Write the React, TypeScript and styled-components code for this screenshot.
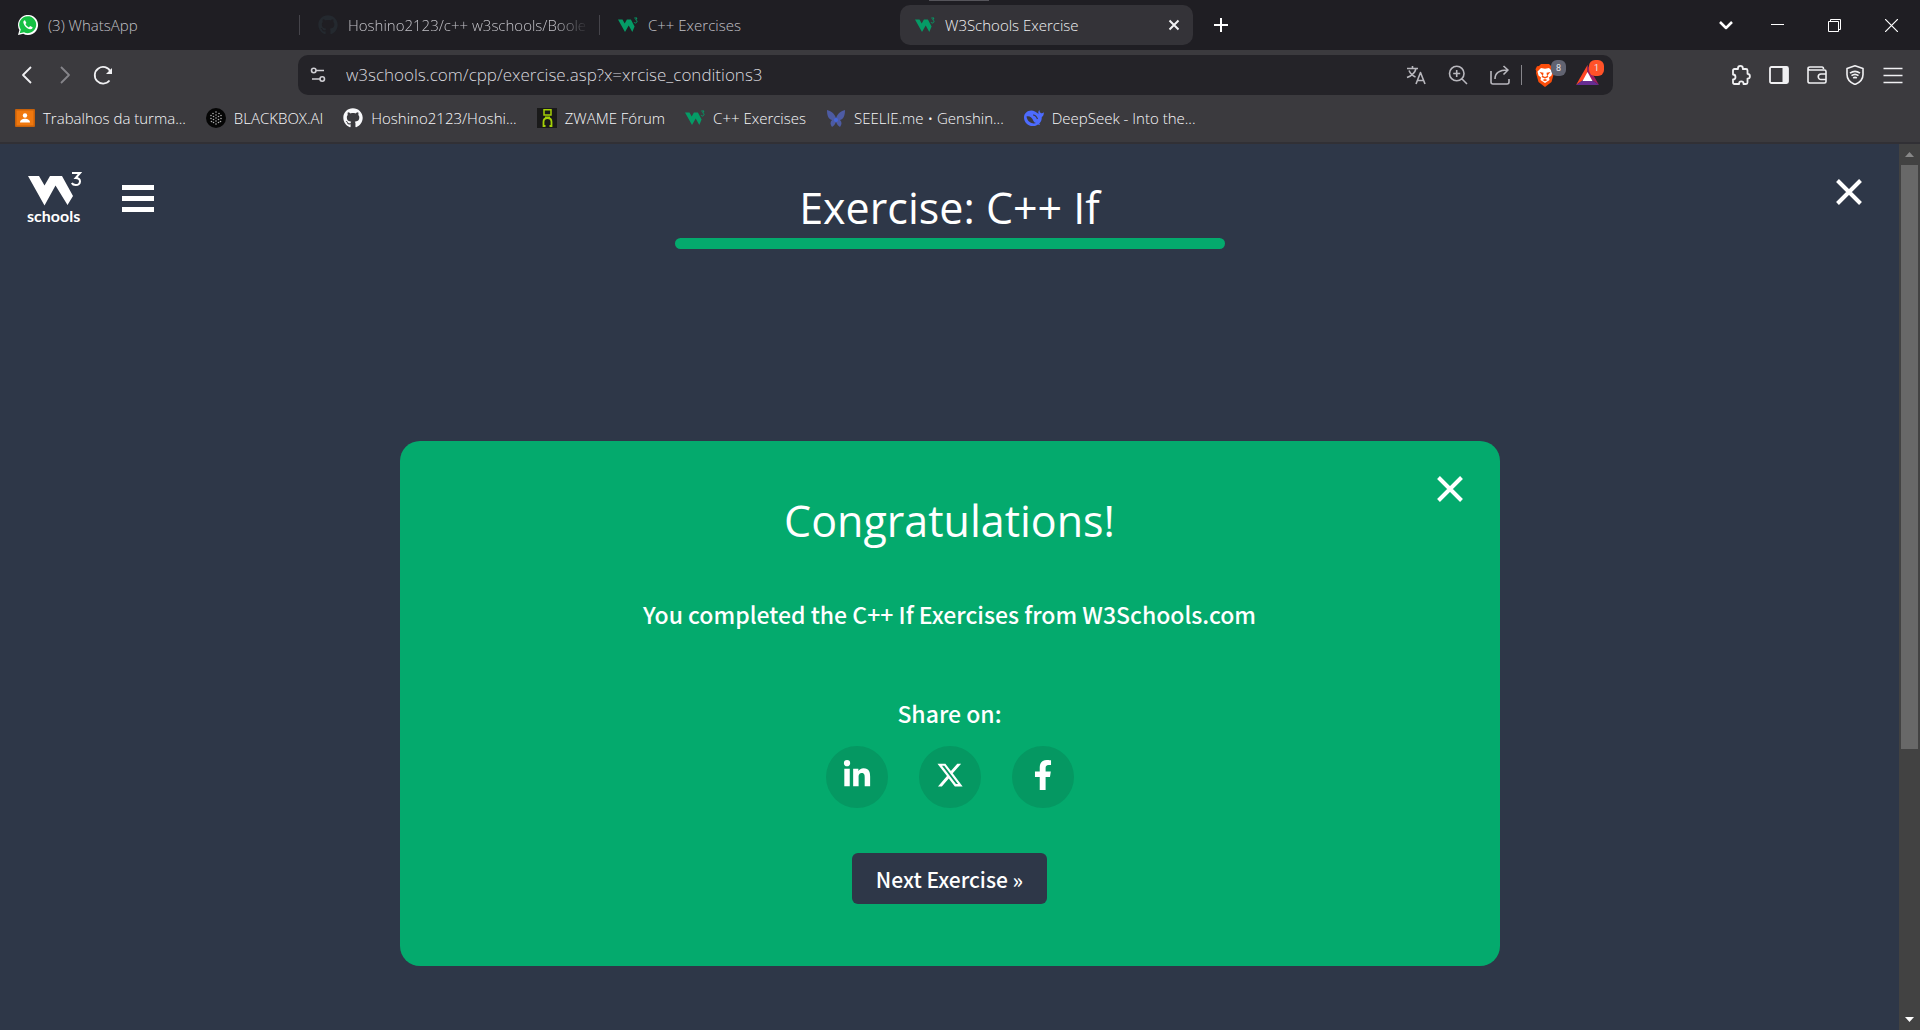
import React from "react";
import styled, { createGlobalStyle } from "styled-components";
import { FaGithub, FaLinkedinIn, FaFacebookF } from "react-icons/fa";
import { FaXTwitter } from "react-icons/fa6";

const UI = `"Open Sans", "Noto Sans", sans-serif`;
const SOURCE = `"Noto Sans CJK SC", "Open Sans", sans-serif`;

const GlobalStyle = createGlobalStyle`
  * { box-sizing: border-box; }
  body { margin: 0; background: #2e3748; font-family: ${UI}; color: #fff; overflow: hidden; }
  button, input { font: inherit; color: inherit; }
  button { padding: 0; border: 0; background: none; cursor: pointer; }
  a { color: inherit; text-decoration: none; }
  svg { display: block; flex: none; }
`;

const Window = styled.div`
  display: flex;
  flex-direction: column;
  height: 100vh;
`;

/* ---------- tab strip ---------- */
const TabStrip = styled.header`
  display: flex;
  align-items: center;
  height: 50px;
  flex: none;
  background: #1f1e23;
  position: relative;
`;
const DragHandle = styled.span`
  position: absolute;
  top: 0;
  left: 929px;
  width: 60px;
  height: 1px;
  background: #55545a;
`;
const Tabs = styled.nav`
  display: flex;
  flex: 0 1 1200px;
  min-width: 0;
`;
const Tab = styled.div<{ $divider?: boolean }>`
  display: flex;
  align-items: center;
  flex: 1 1 0;
  min-width: 0;
  height: 40px;
  position: relative;
  padding-right: 7px;
  &::after {
    content: "";
    display: ${(p) => (p.$divider ? "block" : "none")};
    position: absolute;
    right: 0;
    top: 10px;
    height: 20px;
    width: 1px;
    background: #45444a;
  }
`;
const TabFace = styled.button<{ $active?: boolean }>`
  display: flex;
  align-items: center;
  gap: 10px;
  flex: 1;
  min-width: 0;
  height: 40px;
  padding: ${(p) => (p.$active ? "0 13px 0 15px" : "0 4px 0 18px")};
  border-radius: 10px;
  background: ${(p) => (p.$active ? "#343338" : "transparent")};
  color: ${(p) => (p.$active ? "#f2f2f4" : "#c2c1c7")};
  font-size: 15px;
  line-height: 20px;
  font-weight: 300;
  text-align: left;
`;
const TabTitle = styled.span<{ $fade?: boolean }>`
  flex: 1;
  min-width: 0;
  overflow: hidden;
  white-space: nowrap;
  ${(p) => p.$fade && "mask-image: linear-gradient(90deg, #000 86%, transparent);"}
`;
const NewTab = styled.button`
  display: grid;
  place-items: center;
  width: 42px;
  height: 40px;
`;
const WindowControls = styled.div`
  display: flex;
  margin-left: auto;
`;
const WindowButton = styled.button<{ $narrow?: boolean }>`
  display: grid;
  place-items: center;
  width: ${(p) => (p.$narrow ? 46 : 57)}px;
  height: 48px;
`;

/* ---------- toolbar ---------- */
const Toolbar = styled.div`
  display: grid;
  grid-template-columns: 298px minmax(0, 1fr) 307px;
  align-items: center;
  height: 50px;
  flex: none;
  background: #3b3a3e;
`;
const NavGroup = styled.div`
  display: flex;
  padding-left: 8px;
`;
const NavButton = styled.button<{ $dim?: boolean }>`
  display: grid;
  place-items: center;
  width: 38px;
  height: 40px;
  color: ${(p) => (p.$dim ? "#86858a" : "#f0f0f2")};
`;
const AddressBar = styled.div`
  display: flex;
  align-items: center;
  height: 40px;
  padding: 0 7px 0 10px;
  border-radius: 10px;
  background: #242328;
  color: #b8b7bd;
`;
const SiteButton = styled.button`
  display: grid;
  place-items: center;
  width: 20px;
  height: 40px;
  margin-right: 18px;
  color: #d0cfd4;
`;
const UrlLabel = styled.label`
  display: flex;
  flex: 1;
  min-width: 0;
  font-size: 17px;
  font-weight: 300;
`;
const UrlInput = styled.input`
  flex: 1;
  min-width: 0;
  height: 32px;
  padding: 0 0 2px;
  border: 0;
  outline: 0;
  background: none;
  color: #d9d8de;
`;
const AddressAction = styled.button<{ $width?: number }>`
  display: grid;
  place-items: center;
  position: relative;
  width: ${(p) => p.$width ?? 42}px;
  height: 40px;
`;
const AddressDivider = styled.span`
  width: 1px;
  height: 20px;
  background: #87868b;
`;
const Badge = styled.span<{ $color: string }>`
  position: absolute;
  top: 5px;
  right: 2px;
  width: 15px;
  height: 16px;
  border-radius: 6px;
  background: ${(p) => p.$color};
  color: #e6e6ea;
  font: 9px/16px Roboto, sans-serif;
  text-align: center;
`;
const ToolGroup = styled.div`
  display: flex;
  justify-content: flex-end;
  padding-right: 8px;
  color: #ececef;
`;

/* ---------- bookmarks ---------- */
const BookmarkBar = styled.nav`
  display: flex;
  align-items: center;
  gap: 20px;
  height: 44px;
  flex: none;
  padding: 0 15px 6px;
  border-bottom: 2px solid #313035;
  background: #3b3a3e;
`;
const Bookmark = styled.a`
  display: flex;
  align-items: center;
  gap: 8px;
  color: #f8f8fa;
  font-size: 15px;
  line-height: 20px;
  font-weight: 300;
  white-space: nowrap;
`;

/* ---------- page ---------- */
const Viewport = styled.div`
  display: flex;
  flex: 1;
  min-height: 0;
`;
const Page = styled.main`
  flex: 1;
  min-width: 0;
  overflow: hidden;
  background: #2e3748;
`;
const PageHeader = styled.div`
  display: grid;
  grid-template-columns: 1fr minmax(0, 550px) 1fr;
  align-items: start;
`;
const HeaderLeft = styled.div`
  display: flex;
  gap: 40px;
  padding: 27px 0 0 27px;
`;
const MenuButton = styled.button`
  display: grid;
  align-content: center;
  gap: 6px;
  width: 32px;
  height: 54px;
`;
const MenuLine = styled.span`
  height: 5px;
  background: #fff;
`;
const TitleBlock = styled.div`
  padding-top: 34px;
`;
const Title = styled.h1`
  margin: 0;
  font-size: 43px;
  line-height: 60px;
  font-weight: 400;
  text-align: center;
  white-space: nowrap;
`;
const Progress = styled.div`
  height: 11px;
  border-radius: 6px;
  background: #04aa6d;
`;
const CloseButton = styled.button`
  display: grid;
  place-items: center;
  width: 30px;
  height: 30px;
`;
const HeaderRight = styled.div`
  display: flex;
  justify-content: flex-end;
  padding: 33px 35px 0 0;
`;
const Card = styled.section`
  position: relative;
  display: flex;
  flex-direction: column;
  align-items: center;
  width: calc(100% - 60px);
  max-width: 1100px;
  margin: 192px auto 0;
  padding: 50px 30px 62px;
  border-radius: 20px;
  background: #04aa6d;
`;
const CardClose = styled(CloseButton)`
  position: absolute;
  top: 33px;
  right: 35px;
`;
const Lead = styled.p<{ $top: number }>`
  margin: ${(p) => p.$top}px 0 0;
  font-family: ${SOURCE};
  font-size: 23px;
  line-height: 32px;
  font-weight: 500;
`;
const ShareRow = styled.div`
  display: flex;
  gap: 31px;
  margin-top: 17px;
`;
const ShareLink = styled.a`
  display: grid;
  place-items: center;
  width: 62px;
  height: 62px;
  padding-bottom: 4px;
  border-radius: 50%;
  background: #059862;
`;
const NextButton = styled.button`
  height: 51px;
  margin-top: 45px;
  padding: 0 24px;
  border-radius: 6px;
  background: #2e3748;
  font-family: ${SOURCE};
  font-size: 21px;
  font-weight: 500;
`;

/* ---------- scrollbar ---------- */
const Scrollbar = styled.div`
  display: flex;
  flex-direction: column;
  align-items: center;
  width: 21px;
  background: #424242;
`;
const ScrollArrow = styled.button`
  display: grid;
  place-items: center;
  width: 21px;
  height: 21px;
`;
const ScrollTrack = styled.div`
  display: flex;
  flex-direction: column;
  flex: 1;
  width: 17px;
  &::after {
    content: "";
    flex: 4;
  }
`;
const ScrollThumb = styled.div`
  flex: 9;
  background: #686868;
`;

/* ---------- drawings ---------- */
const W3Mark = () => (
  <svg width="20" height="20" viewBox="0 0 20 20" fill="#059b66">
    <path d="M0 4.500h4.500l2.200 4 2.200-4h4l3.700 7L14.300 17l-3.600-6.500L7 17z" />
    <path d="M16.300 3h2.700l-1.300 2c1.900 0 1.700 3-.2 3-.7 0-1.200-.3-1.400-.8" fill="none" stroke="#059b66" strokeWidth="1" />
  </svg>
);

const W3Logo = () => (
  <svg width="55" height="53" viewBox="0 0 55 53" fill="#fff" role="img" aria-label="W3Schools">
    <path d="M1 5H12L17.500 14.500 23 5H35L46 25 40.500 34 28.500 14.500 17.500 34.500z" />
    <path d="M45 2h8l-4.300 5c6 0 5.400 7 0 7-2 0-3.200-.7-3.900-2" fill="none" stroke="#fff" strokeWidth="2" />
    <text x="0" y="51" fontFamily="Lato, sans-serif" fontWeight="700" fontSize="16">schools</text>
  </svg>
);

const Cross = ({ size, weight }: { size: number; weight: number }) => (
  <svg width={size} height={size} viewBox={`0 0 ${size} ${size}`} stroke="currentColor" strokeWidth={weight}>
    <path d={`M1.500 1.500L${size - 1.5} ${size - 1.5}M${size - 1.5} 1.500L1.500 ${size - 1.5}`} />
  </svg>
);

const WhatsApp = () => (
  <svg width="20" height="20" viewBox="0 0 20 20">
    <path d="M0 20l1.400-5A10 10 0 1 1 5.200 18.700z" fill="#fff" />
    <path d="M1.700 18.300l1.100-3.700A8.500 8.500 0 1 1 6 17.300z" fill="#15c043" />
    <path d="M7 5.300c-.8-.2-1.900 1-1.600 2.400.7 3 3.500 5.900 6.700 6.600 1.300.2 2.700-.8 2.500-2l-2.500-1.200-1.200 1.300C9.300 11.800 8 10.500 7.400 9L8.400 8z" fill="#fff" />
  </svg>
);

const DOTS = [
  [10, 4], [7, 5.5], [13, 5.5], [10, 7], [5, 7.5], [15, 7.5], [7.5, 8.5], [12.5, 8.5], [10, 10],
  [5, 10.5], [15, 10.5], [7.5, 11.5], [12.5, 11.5], [10, 13], [5.5, 13.5], [14.5, 13.5], [7.5, 14.5], [12.5, 14.5], [10, 16],
];

const BlackBox = () => (
  <svg width="20" height="20" viewBox="0 0 20 20">
    <circle cx="10" cy="10" r="10" fill="#050505" />
    <g fill="#aaa">
      {DOTS.map(([x, y]) => (
        <circle key={`${x}-${y}`} cx={x} cy={y} r="0.800" />
      ))}
    </g>
  </svg>
);

const Classroom = () => (
  <svg width="20" height="18" viewBox="0 0 20 18">
    <rect width="20" height="18" rx="1" fill="#c7610b" />
    <rect x="1.500" y="1.500" width="17" height="15" fill="#f0780e" />
    <circle cx="10" cy="6.500" r="2.200" fill="#fff" />
    <path d="M5 13.500c0-5 10-5 10 0z" fill="#fff" />
  </svg>
);

const Zwame = () => (
  <svg width="20" height="20" viewBox="0 0 20 20" fill="none" stroke="#a4d007" strokeWidth="1.500">
    <rect width="20" height="20" fill="#1a1a1a" stroke="none" />
    <path d="M7 1.800H14V7H7zM8 9.200H13" />
    <path d="M8.500 18H6.500V14C6.500 11 8 10 10.500 10S14.500 11 14.500 14V18H12.500" strokeWidth="1.800" />
  </svg>
);

const Seelie = () => (
  <svg width="20" height="20" viewBox="0 0 20 20" fill="#4d5ba3">
    <path d="M1 2c4 1 7 3 9 8 2-5 5-7 9-8 0 5-1 9-5 10 2 2 2 4 0 7-2-1-3-3-4-5-1 2-2 4-4 5-2-3-2-5 0-7C2 11 1 7 1 2z" />
    <circle cx="10" cy="12" r="2" fill="#4466dd" />
  </svg>
);

const DeepSeek = () => (
  <svg width="20" height="20" viewBox="0 0 20 20">
    <path d="M11 3.500C6 1 0 4 0 9.500 0 15 5 18.500 9.500 18c2 0 3.500-.7 4.500-1.500l2 .5-.7-1.500c2-2 2.500-4 2.500-6.500 1.500-.7 2.200-2.500 2-4.700-1 1-2 1.200-3 .8-.8-.5-1.500-1.600-1.300-3-1.200 1-1.500 2.500-.8 4z" fill="#4d6bfe" />
    <path d="M2.500 8.500c3.500-.8 5.500 1.500 7 4.500.5 1 1.500 2 2.500 2-2.500 1.300-8.500 0-9.500-6.500z" fill="#3b3a3e" />
    <path d="M9 7c2 0 3.500 1.500 4.500 4" fill="none" stroke="#3b3a3e" strokeWidth="1.200" />
  </svg>
);

const Line = ({ w = 20, h = 20, sw = 1.6, d }: { w?: number; h?: number; sw?: number; d: string }) => (
  <svg width={w} height={h} viewBox={`0 0 ${w} ${h}`} fill="none" stroke="currentColor" strokeWidth={sw} strokeLinejoin="round">
    <path d={d} />
  </svg>
);

const Reload = () => (
  <svg width="20" height="20" viewBox="0 0 20 20" fill="none" stroke="currentColor" strokeWidth="1.800">
    <path d="M16.500 15.500A8.300 8.300 0 1 1 17.500 6.500" />
    <path d="M19 3v6h-6z" fill="currentColor" stroke="none" />
  </svg>
);

const Brave = () => (
  <svg width="20" height="23" viewBox="0 0 20 23">
    <path d="M4 2L6 0h8l2 2 2 .3 1.500 3-.8 2L19 9l-2.500 9L10 23l-6.500-5L1 9l.3-1.700-.8-2L2 2.300z" fill="#fb4d0a" />
    <path d="M6 4l4 .7L14 4l3.500 3.500-1 4-2.500 2 .5 2.500L10 19l-4.500-3 .5-2.500-2.500-2-1-4z" fill="#fff" />
    <path d="M4.500 8l4 .8L8 12l2 1 2-1-.5-3.200 4-.8-3 3.500 1 1.500L10 14.500 6.500 13l1-1.500zM7.500 16l2.500-1 2.500 1-2.500 1.200z" fill="#fb4d0a" />
  </svg>
);

const Rewards = () => (
  <svg width="23" height="20" viewBox="0 0 23 20">
    <path d="M11.500 0L0 20l11.500-8z" fill="#ff4724" />
    <path d="M11.500 0L23 20l-11.500-8z" fill="#9e1f63" />
    <path d="M0 20h23l-11.500-8z" fill="#662d91" />
    <path d="M11.500 7L6.500 16h10z" fill="#fff" />
  </svg>
);

const BOOKMARKS: [string, React.ReactNode][] = [
  ["Trabalhos da turma...", <Classroom />],
  ["BLACKBOX.AI", <BlackBox />],
  ["Hoshino2123/Hoshi...", <FaGithub size={20} />],
  ["ZWAME Fórum", <Zwame />],
  ["C++ Exercises", <W3Mark />],
  ["SEELIE.me • Genshin...", <Seelie />],
  ["DeepSeek - Into the...", <DeepSeek />],
];

export default function App() {
  return (
    <Window>
      <GlobalStyle />
      <TabStrip>
        <DragHandle />
        <Tabs aria-label="Tabs">
          <Tab $divider>
            <TabFace><WhatsApp /><TabTitle>(3) WhatsApp</TabTitle></TabFace>
          </Tab>
          <Tab $divider>
            <TabFace><FaGithub size={20} color="#24292f" /><TabTitle $fade>Hoshino2123/c++ w3schools/Boole</TabTitle></TabFace>
          </Tab>
          <Tab>
            <TabFace><W3Mark /><TabTitle>C++ Exercises</TabTitle></TabFace>
          </Tab>
          <Tab>
            <TabFace $active>
              <W3Mark /><TabTitle>W3Schools Exercise</TabTitle><Cross size={12} weight={2} />
            </TabFace>
          </Tab>
        </Tabs>
        <NewTab aria-label="New tab"><Line w={14} h={14} sw={2} d="M7 0V14M0 7H14" /></NewTab>
        <WindowControls>
          <WindowButton $narrow aria-label="Search tabs"><Line w={14} h={10} sw={2.5} d="M1 2L7 8L13 2" /></WindowButton>
          <WindowButton aria-label="Minimise"><Line w={13} h={13} sw={1} d="M0 5.500H13" /></WindowButton>
          <WindowButton aria-label="Restore"><Line w={13} h={13} sw={1} d="M.5 2.500H10.500V12.500H.5zM2.500 2V.5H12.500V10.500H11" /></WindowButton>
          <WindowButton aria-label="Close window"><Line w={13} h={13} sw={1.2} d="M0 0L13 13M13 0L0 13" /></WindowButton>
        </WindowControls>
      </TabStrip>

      <Toolbar>
        <NavGroup>
          <NavButton aria-label="Back"><Line w={12} h={18} sw={1.8} d="M10 1L2 9L10 17" /></NavButton>
          <NavButton $dim aria-label="Forward"><Line w={12} h={18} sw={1.8} d="M2 1L10 9L2 17" /></NavButton>
          <NavButton aria-label="Reload"><Reload /></NavButton>
        </NavGroup>
        <AddressBar>
          <SiteButton aria-label="Site information">
            <Line w={16} h={16} sw={1.6} d="M6 3.500a2.200 2.200 0 1 1-4.500 0a2.200 2.200 0 1 1 4.500 0H14M14.500 12a2.200 2.200 0 1 1-4.500 0a2.200 2.200 0 1 1 4.500 0M10 12H2" />
          </SiteButton>
          <UrlLabel aria-label="Address">
            <UrlInput defaultValue="w3schools.com/cpp/exercise.asp?x=xrcise_conditions3" />
          </UrlLabel>
          <AddressAction aria-label="Translate"><Line d="M1 3.500H12M6.500 1V3.500M10 3.500C9 8 5 11 1 12.500M3 5.500C4.500 9 7 11 9.500 12M10 19L14.500 7.500L19 19M11.500 15.500H17.500" /></AddressAction>
          <AddressAction aria-label="Zoom"><Line d="M16 8.500a7.200 7.200 0 1 1-14.500 0a7.200 7.200 0 1 1 14.500 0M13.800 13.800L19 19M8.700 5V12M5.200 8.500H12.200" /></AddressAction>
          <AddressAction aria-label="Share"><Line d="M1 6V17Q1 19 3 19H17Q19 19 19 17V14M5 14C5 8 9 5 17.500 5M13.500 1L18 5L13.500 9.500" /></AddressAction>
          <AddressDivider />
          <AddressAction $width={46} aria-label="Shields"><Brave /><Badge $color="#616371">8</Badge></AddressAction>
          <AddressAction $width={38} aria-label="Rewards"><Rewards /><Badge $color="#ff5228">1</Badge></AddressAction>
        </AddressBar>
        <ToolGroup>
          <NavButton aria-label="Extensions"><Line sw={1.8} d="M3.500 4H7V3.300a2.400 2.400 0 0 1 4.800 0V4H15Q16.500 4 16.500 5.500V8.800a2.400 2.400 0 0 1 0 4.800V17.500Q16.500 19 15 19H12.500V18.500a2.200 2.200 0 0 0-4.400 0V19H3.500Q2 19 2 17.500V14.500a2.500 2.500 0 0 0 0-5V5.500Q2 4 3.500 4z" /></NavButton>
          <NavButton aria-label="Side panel">
            <svg width="20" height="18" viewBox="0 0 20 18"><rect x="1" y="1" width="18" height="16" rx="1.500" fill="none" stroke="currentColor" strokeWidth="1.800" /><path d="M13.500 1H19v16h-5.500z" fill="currentColor" /></svg>
          </NavButton>
          <NavButton aria-label="Wallet"><Line d="M1 3.500Q1 2 3 2H15Q16.500 2 16.500 4M1 3.500Q1 5 3 5H17.500Q19 5 19 6.500V16.500Q19 18 17.500 18H3Q1 18 1 16.500zM19 9H14a2.500 2.500 0 0 0 0 5.500H19" /></NavButton>
          <NavButton aria-label="VPN"><Line d="M10 .8L18 3.500V9.500C18 14 15 17.500 10 19.500C5 17.500 2 14 2 9.500V3.500zM5 8.200Q10 4.500 15 8.200M6.500 10.700Q10 8 13.500 10.700M8.200 13Q10 11.700 11.800 13" /></NavButton>
          <NavButton aria-label="Menu"><Line d="M.5 3.500H19.500M.5 10.500H19.500M.5 17.500H19.500" /></NavButton>
        </ToolGroup>
      </Toolbar>

      <BookmarkBar aria-label="Bookmarks">
        {BOOKMARKS.map(([label, icon]) => (
          <Bookmark href="#" key={label}>{icon}{label}</Bookmark>
        ))}
      </BookmarkBar>

      <Viewport>
        <Page>
          <PageHeader>
            <HeaderLeft>
              <a href="#"><W3Logo /></a>
              <MenuButton aria-label="Open menu"><MenuLine /><MenuLine /><MenuLine /></MenuButton>
            </HeaderLeft>
            <TitleBlock>
              <Title>Exercise: C++ If</Title>
              <Progress role="progressbar" aria-label="Exercise progress" aria-valuenow={100} />
            </TitleBlock>
            <HeaderRight>
              <CloseButton aria-label="Close exercise"><Cross size={26} weight={4} /></CloseButton>
            </HeaderRight>
          </PageHeader>
          <Card>
            <CardClose aria-label="Close message"><Cross size={26} weight={4} /></CardClose>
            <Title as="h2">Congratulations!</Title>
            <Lead $top={47}>You completed the C++ If Exercises from W3Schools.com</Lead>
            <Lead $top={67}>Share on:</Lead>
            <ShareRow>
              <ShareLink href="#" aria-label="LinkedIn"><FaLinkedinIn size={30} /></ShareLink>
              <ShareLink href="#" aria-label="X"><FaXTwitter size={28} /></ShareLink>
              <ShareLink href="#" aria-label="Facebook"><FaFacebookF size={30} /></ShareLink>
            </ShareRow>
            <NextButton>Next Exercise »</NextButton>
          </Card>
        </Page>
        <Scrollbar>
          <ScrollArrow aria-label="Scroll up"><svg width="9" height="5" viewBox="0 0 9 5"><path d="M0 5L4.500 0L9 5z" fill="#888" /></svg></ScrollArrow>
          <ScrollTrack><ScrollThumb /></ScrollTrack>
          <ScrollArrow aria-label="Scroll down"><svg width="9" height="5" viewBox="0 0 9 5"><path d="M0 0L4.500 5L9 0z" fill="#fff" /></svg></ScrollArrow>
        </Scrollbar>
      </Viewport>
    </Window>
  );
}
